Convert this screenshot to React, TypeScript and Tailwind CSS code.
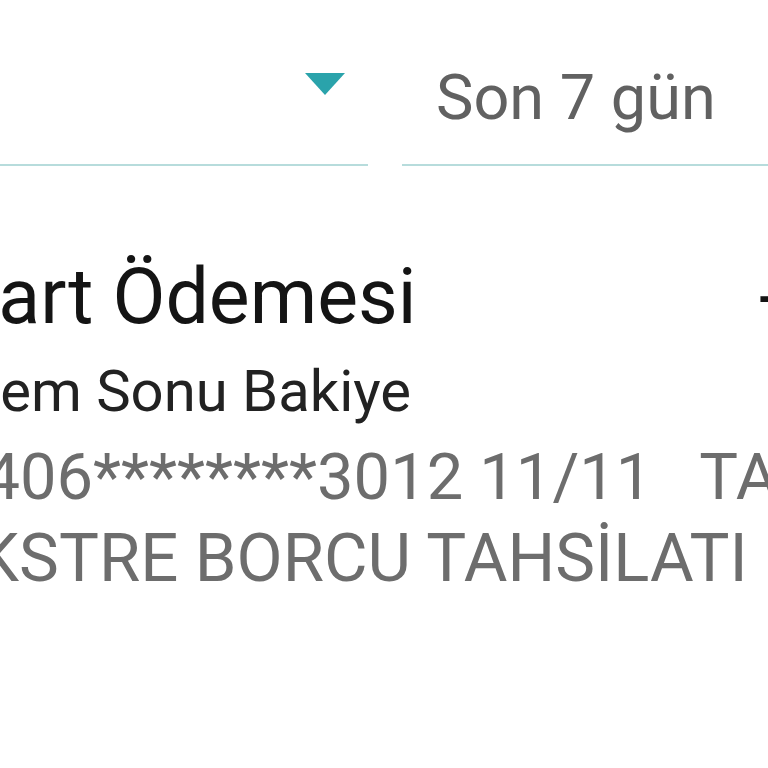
import React from 'react';

export default function App() {
  return (
    <div className="w-[768px] h-[768px] bg-white overflow-hidden font-['Roboto',sans-serif]">
      {/* filter spinners */}
      <div className="flex gap-[34px]">
        <div className="w-[368px] shrink-0 h-[166px] pt-[73px] border-b-2 border-[#b7dcdc] flex items-start justify-end pr-[23px]">
          <div className="w-0 h-0 border-l-[20px] border-r-[20px] border-t-[22px] border-l-transparent border-r-transparent border-t-[#2aa3ab]" />
        </div>
        <div className="flex-1 h-[166px] pt-[30px] border-b-2 border-[#b7dcdc] flex items-center pl-[34px]">
          <span className="text-[63px] leading-none text-[#616161] whitespace-nowrap">Son 7 gün</span>
        </div>
      </div>

      {/* transaction row */}
      <div className="flex mt-[83px] overflow-hidden">
        <div className="w-[759px] shrink-0 overflow-hidden">
          <div className="-ml-[50px] text-[77px] leading-[96px] text-[#141414] whitespace-nowrap">Kart Ödemesi</div>
        </div>
        <div className="text-[77px] leading-[96px] text-[#141414] whitespace-nowrap">-1.250,00 TL</div>
      </div>
      <div className="mt-[10px] -ml-[103px] text-[58px] leading-[72px] text-[#222222] whitespace-nowrap">Dönem Sonu Bakiye</div>
      <div className="mt-[10px] -ml-[53px] text-[65px] leading-[81px] text-[#6d6d6d] whitespace-pre">{'5406********3012 11/11   TAKSİT'}</div>
      <div className="-ml-[61px] text-[67px] leading-[81px] text-[#6d6d6d] whitespace-nowrap">EKSTRE BORCU TAHSİLATI</div>
    </div>
  );
}
